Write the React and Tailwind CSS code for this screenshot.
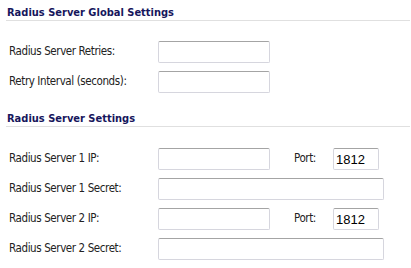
import React from "react";

const inputCls =
  "h-[22px] border border-[#d6d6de] border-t-[#a4a4a4] rounded-[2px] bg-white px-[2px] text-[13px] text-black outline-none";

const labelFont = { fontFamily: "'DejaVu Sans Condensed', 'DejaVu Sans', Tahoma, sans-serif" };

const Heading = ({ children, className = "" }) => (
  <div
    className={`pl-[1px] pt-[6px] pb-[1px] border-b border-[#e0e0e0] text-[11px] leading-[13px] font-bold text-[#16165c] ${className}`}
    style={{ fontFamily: "'DejaVu Sans Condensed', 'DejaVu Sans', Verdana, sans-serif" }}
  >
    {children}
  </div>
);

const Row = ({ label, children }) => (
  <div className="flex h-[30px] items-center pl-[3px]">
    <div className="w-[149px] text-[11.5px] tracking-[-0.4px] text-[#222]" style={labelFont}>
      {label}
    </div>
    {children}
  </div>
);

const App = () => {
  return (
    <div
      className="w-[411px] h-[268px] bg-white pl-[6px] pr-[1px]"
      style={{ fontFamily: "'Liberation Sans', Arial, sans-serif" }}
    >
      <Heading>Radius Server Global Settings</Heading>
      <div className="mt-[16px]">
        <Row label="Radius Server Retries:">
          <input className={`${inputCls} w-[112px]`} />
        </Row>
        <Row label="Retry Interval (seconds):">
          <input className={`${inputCls} w-[112px]`} />
        </Row>
      </div>

      <Heading className="mt-[9px]">Radius Server Settings</Heading>
      <div className="mt-[17px]">
        <Row label="Radius Server 1 IP:">
          <input className={`${inputCls} w-[112px]`} />
          <div className="ml-[24px] w-[39px] text-[11.5px] tracking-[-0.4px] text-[#222]" style={labelFont}>
            Port:
          </div>
          <input className={`${inputCls} w-[46px]`} defaultValue="1812" />
        </Row>
        <Row label="Radius Server 1 Secret:">
          <input className={`${inputCls} w-[226px]`} />
        </Row>
        <Row label="Radius Server 2 IP:">
          <input className={`${inputCls} w-[112px]`} />
          <div className="ml-[24px] w-[39px] text-[11.5px] tracking-[-0.4px] text-[#222]" style={labelFont}>
            Port:
          </div>
          <input className={`${inputCls} w-[46px]`} defaultValue="1812" />
        </Row>
        <Row label="Radius Server 2 Secret:">
          <input className={`${inputCls} w-[226px]`} />
        </Row>
      </div>
    </div>
  );
};

export default App;
